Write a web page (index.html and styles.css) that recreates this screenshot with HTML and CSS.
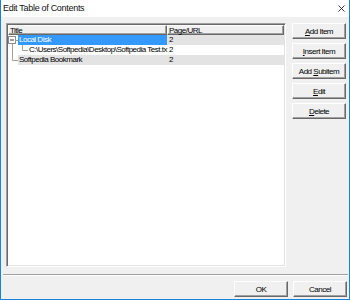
FILE: index.html
```html
<!DOCTYPE html>
<html lang="en">
<head>
  <meta charset="UTF-8">
  <title>Edit Table of Contents</title>
  <link rel="stylesheet" href="styles.css">
</head>
<body>
  <div class="window">
    <div class="titlebar">
      <span class="titlebar__text">Edit Table of Contents</span>
      <svg class="titlebar__close" width="7" height="7" viewBox="0 0 7 7">
        <path d="M0.5 0.5 L6.5 6.5 M6.5 0.5 L0.5 6.5" stroke="#222" stroke-width="0.9" fill="none"/>
      </svg>
    </div>
    <div class="dialog">
      <div class="dialog__main">
        <div class="toc">
          <div class="toc__head">
            <div class="toc__col toc__col--title">Title</div>
            <div class="toc__col toc__col--page">Page/URL</div>
          </div>
          <div class="toc__body">
            <!-- tree lines -->
            <svg class="toc__tree" width="30" height="40" viewBox="0 0 30 40">
              <g stroke="#a0a0a0" stroke-width="1" fill="none">
                <rect x="0.5" y="1.5" width="7" height="7" stroke="#8c8c8c" fill="#fff"/>
                <path d="M2 5 H6" stroke="#333"/>
                <path d="M7.5 5.5 H10"/>
                <path d="M4.5 8.5 V25.5 H10"/>
                <path d="M14.5 10 V15.5 H20"/>
              </g>
            </svg>
            <div class="toc__row">
              <div class="toc__cell toc__cell--title toc__cell--lv1"><span class="toc__label toc__label--selected">Local Disk</span></div>
              <div class="toc__cell toc__cell--page toc__cell--gray">2</div>
            </div>
            <div class="toc__row">
              <div class="toc__cell toc__cell--title toc__cell--lv2"><span class="toc__label">C:\Users\Softpedia\Desktop\Softpedia Test.tx</span></div>
              <div class="toc__cell toc__cell--page">2</div>
            </div>
            <div class="toc__row">
              <div class="toc__cell toc__cell--title toc__cell--lv1"><span class="toc__label toc__label--gray">Softpedia Bookmark</span></div>
              <div class="toc__cell toc__cell--page toc__cell--gray">2</div>
            </div>
          </div>
        </div>
        <div class="btn-col">
          <button class="btn"><u>A</u>dd Item</button>
          <button class="btn"><u>I</u>nsert Item</button>
          <button class="btn">Add <u>S</u>ubitem</button>
          <button class="btn"><u>E</u>dit</button>
          <button class="btn"><u>D</u>elete</button>
        </div>
      </div>
      <div class="dialog__sep"></div>
      <div class="dialog__foot">
        <button class="btn">OK</button>
        <button class="btn">Cancel</button>
      </div>
    </div>
  </div>
</body>
</html>
```

FILE: styles.css
```css
html, body {
  margin: 0;
  padding: 0;
}
body {
  width: 350px;
  height: 300px;
  background: #f0f0f0;
  font-family: "Liberation Sans", Arial, sans-serif;
  font-size: 8px;
  color: #000;
}

/* window frame */
.window {
  width: 350px;
  height: 300px;
  box-sizing: border-box;
  border: 1px solid #1883d7;
  border-top: 0;
  background: #f0f0f0;
  display: flex;
  flex-direction: column;
}
.titlebar {
  height: 16px;
  background: #fff;
  display: flex;
  align-items: center;
  justify-content: space-between;
  padding: 0 4px 1px 2px;
}
.titlebar__text {
  font-size: 9px;
  letter-spacing: -0.3px;
  color: #111;
}
.titlebar__close {
  display: block;
}

/* dialog body */
.dialog {
  flex: 1;
  display: flex;
  flex-direction: column;
}
.dialog__main {
  display: flex;
  gap: 6px;
  padding: 6px 2px 0 5px;
}
.dialog__sep {
  margin: 7px 1px 0 2px;
  height: 1px;
  background: #a0a0a0;
  border-bottom: 1px solid #fff;
}
.dialog__foot {
  display: flex;
  justify-content: flex-end;
  gap: 5px;
  padding: 5px 2px 0 0;
}

/* list */
.toc {
  width: 280px;
  height: 244px;
  box-sizing: border-box;
  background: #fff;
  border: 1px solid;
  border-color: #a0a0a0 #fff #fff #a0a0a0;
  box-shadow: inset 1px 1px 0 #696969, inset -1px -1px 0 #e3e3e3;
  padding: 1px;
}
.toc__head {
  display: flex;
  height: 10px;
}
.toc__col {
  box-sizing: border-box;
  height: 10px;
  line-height: 9px;
  background: #f0f0f0;
  border: 1px solid;
  border-color: #fff #696969 #696969 #fff;
  box-shadow: inset -1px -1px 0 #a0a0a0;
  padding-left: 1px;
  letter-spacing: -0.5px;
}
.toc__col--title {
  width: 159px;
}
.toc__col--page {
  width: 117px;
}
.toc__body {
  position: relative;
}
.toc__tree {
  position: absolute;
  left: 0;
  top: 0;
}
.toc__row {
  display: flex;
  height: 10px;
  line-height: 10px;
  letter-spacing: -0.5px;
}
.toc__cell {
  box-sizing: border-box;
  white-space: nowrap;
}
.toc__cell--title {
  width: 159px;
  display: flex;
}
.toc__cell--lv1 {
  padding-left: 10px;
}
.toc__cell--lv2 {
  padding-left: 20px;
}
.toc__cell--page {
  width: 117px;
  padding-left: 2px;
}
.toc__cell--gray {
  background: #e3e3e3;
}
.toc__label {
  flex: 1;
  padding-left: 1px;
}
.toc__label--selected {
  background: #3399ff;
  color: #fff;
}
.toc__label--gray {
  background: #e3e3e3;
}

/* buttons */
.btn-col {
  display: flex;
  flex-direction: column;
  gap: 4px;
}
.btn {
  width: 54px;
  height: 16px;
  box-sizing: border-box;
  padding: 0;
  margin: 0;
  font-family: "Liberation Sans", Arial, sans-serif;
  font-size: 8px;
  letter-spacing: -0.5px;
  color: #000;
  background: #f0f0f0;
  border: 1px solid;
  border-color: #fff #696969 #696969 #fff;
  box-shadow: inset -1px -1px 0 #a0a0a0;
  border-radius: 0;
}
.btn u {
  text-decoration-thickness: 1px;
}
```
